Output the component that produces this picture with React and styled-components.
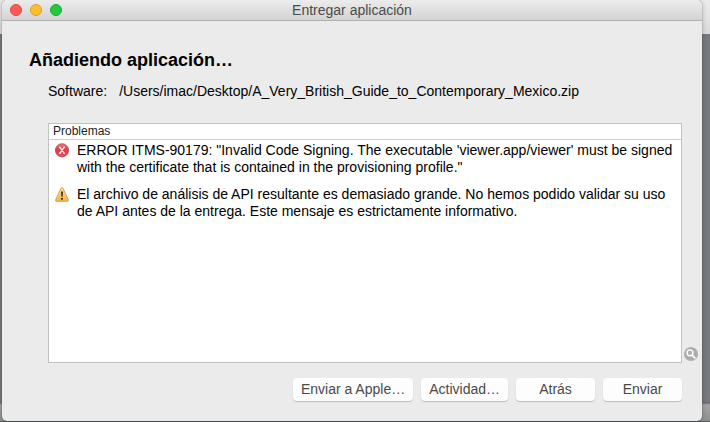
import React from "react";
import styled, { createGlobalStyle } from "styled-components";

const GlobalStyle = createGlobalStyle`
  *, *::before, *::after { box-sizing: border-box; }
  body {
    margin: 0;
    font-family: "Liberation Sans", Helvetica, Arial, sans-serif;
    font-size: 14px;
    line-height: 17px;
    color: #000;
  }
`;

const Desktop = styled.div`
  display: flex;
  min-height: 100vh;
  padding: 0 8px 1px 2px;
  background:
    linear-gradient(#55575a, #55575a) bottom left / 100% 1px no-repeat,
    linear-gradient(#5c5d5f, #a4a4a4 3px, #8f8f8f) bottom left / 100% 20px no-repeat,
    linear-gradient(#ececec, #dadada) top left / 100% 34px no-repeat,
    #76797e;
`;

const Window = styled.main`
  flex: 1;
  min-width: 0;
  display: flex;
  flex-direction: column;
  background: #ebebeb;
  border-radius: 5px;
  box-shadow: 0 0 1px rgba(0, 0, 0, 0.5), 0 0 5px rgba(0, 0, 0, 0.25);
  overflow: hidden;
`;

const TitleBar = styled.header`
  display: grid;
  grid-template-columns: 1fr auto 1fr;
  align-items: center;
  height: 21px;
  padding: 0 8px;
  background: linear-gradient(#ececec, #d3d3d3);
  border-bottom: 1px solid #b1b1b1;
`;

const Lights = styled.div`
  display: flex;
  gap: 8px;
`;

const Light = styled.button`
  width: 12px;
  height: 12px;
  padding: 0;
  border: 1px solid ${(p) => p.$edge};
  border-radius: 50%;
  background: ${(p) => p.$fill};
`;

const WindowTitle = styled.div`
  color: #4b4b4b;
`;

const Content = styled.div`
  flex: 1;
  display: flex;
  flex-direction: column;
  padding: 28px 4px 20px 27px;
`;

const Heading = styled.h1`
  margin: 0;
  font-size: 18px;
  line-height: 22px;
  font-weight: bold;
`;

const Software = styled.dl`
  display: flex;
  gap: 12px;
  margin: 12px 0 23px 19px;

  dt, dd { margin: 0; }
`;

const PanelRow = styled.div`
  flex: 1;
  display: flex;
  align-items: flex-end;
  gap: 2px;
  margin-left: 19px;
`;

const Panel = styled.section`
  flex: 1;
  min-width: 0;
  align-self: stretch;
  background: #fff;
  border: 1px solid #c2c2c2;
`;

const PanelHeader = styled.h2`
  margin: 0;
  padding: 0 4px;
  font-size: 12px;
  line-height: 15px;
  font-weight: normal;
  color: #222;
  border-bottom: 1px solid #cfcfcf;
`;

const Problems = styled.ul`
  display: flex;
  flex-direction: column;
  gap: 10px;
  margin: 0;
  padding: 2px 6px;
  list-style: none;
`;

const Problem = styled.li`
  display: flex;
  gap: 8px;

  svg { flex: none; margin-top: 1px; }
`;

const Line = styled.span`
  display: block;
`;

const SearchButton = styled.button`
  display: flex;
  margin-bottom: 2px;
  padding: 0;
  border: 0;
  background: none;
`;

const Actions = styled.footer`
  display: flex;
  justify-content: flex-end;
  gap: 8px;
  margin: 15px 16px 0 0;
`;

const ActionButton = styled.button`
  min-width: 79px;
  height: 23px;
  padding: 0 8px;
  border: 0;
  border-radius: 4px;
  background: #fdfdfd;
  box-shadow: 0 1px 1px rgba(0, 0, 0, 0.2);
  font: inherit;
  color: #4a4a4a;
`;

const ErrorIcon = () => (
  <svg width="14" height="15" viewBox="0 0 14 15" aria-label="Error" role="img">
    <defs>
      <linearGradient id="err" x1="0" y1="0" x2="0" y2="1">
        <stop offset="0" stopColor="#e8757a" />
        <stop offset="0.5" stopColor="#dc3f48" />
        <stop offset="1" stopColor="#e8525a" />
      </linearGradient>
    </defs>
    <circle cx="7" cy="7.3" r="6.6" fill="url(#err)" stroke="#c03d44" strokeWidth="0.8" />
    <path d="M4.9 4.4L9.1 10.2M9.1 4.4L4.9 10.2" stroke="#fff" strokeWidth="1.3" strokeLinecap="round" />
    <path d="M4.1 4.2H5.8M8.2 4.2H9.9M4.1 10.4H5.8M8.2 10.4H9.9" stroke="#fff" strokeWidth="0.8" />
  </svg>
);

const WarningIcon = () => (
  <svg width="14" height="15" viewBox="0 0 14 15" aria-label="Advertencia" role="img">
    <defs>
      <linearGradient id="warn" x1="0" y1="0" x2="0" y2="1">
        <stop offset="0" stopColor="#fbe3a0" />
        <stop offset="1" stopColor="#f6b445" />
      </linearGradient>
    </defs>
    <path d="M7 0.6C7.5 0.6 7.8 0.9 8 1.3L13.4 12.9C13.7 13.7 13.4 14.3 12.6 14.3H1.4C0.6 14.3 0.3 13.7 0.6 12.9L6 1.3C6.2 0.9 6.5 0.6 7 0.6Z" fill="url(#warn)" stroke="#cf9a4a" strokeWidth="0.9" />
    <path d="M6 4.6H8L7.6 9.8H6.4Z" fill="#3f2b12" />
    <circle cx="7" cy="11.8" r="1.1" fill="#3f2b12" />
  </svg>
);

const SearchIcon = () => (
  <svg width="14" height="14" viewBox="0 0 14 14" aria-hidden="true">
    <circle cx="7" cy="7" r="7" fill="#adadad" />
    <circle cx="6" cy="5.8" r="2.9" fill="none" stroke="#fff" strokeWidth="1.4" />
    <path d="M8.2 8.1L10.8 10.8" stroke="#fff" strokeWidth="1.8" strokeLinecap="round" />
  </svg>
);

const problems = [
  {
    Icon: ErrorIcon,
    lines: [
      "ERROR ITMS-90179: \"Invalid Code Signing. The executable 'viewer.app/viewer' must be signed",
      "with the certificate that is contained in the provisioning profile.\"",
    ],
  },
  {
    Icon: WarningIcon,
    lines: [
      "El archivo de análisis de API resultante es demasiado grande. No hemos podido validar su uso",
      "de API antes de la entrega. Este mensaje es estrictamente informativo.",
    ],
  },
];

export default function App() {
  return (
    <>
      <GlobalStyle />
      <Desktop>
        <Window>
          <TitleBar>
            <Lights>
              <Light aria-label="Cerrar" $fill="#fc5b57" $edge="#e2463f" />
              <Light aria-label="Minimizar" $fill="#fdbc32" $edge="#dfa023" />
              <Light aria-label="Ampliar" $fill="#27c63f" $edge="#1dab2c" />
            </Lights>
            <WindowTitle>Entregar aplicación</WindowTitle>
          </TitleBar>
          <Content>
            <Heading>Añadiendo aplicación…</Heading>
            <Software>
              <dt>Software:</dt>
              <dd>/Users/imac/Desktop/A_Very_British_Guide_to_Contemporary_Mexico.zip</dd>
            </Software>
            <PanelRow>
              <Panel>
                <PanelHeader>Problemas</PanelHeader>
                <Problems>
                  {problems.map(({ Icon, lines }) => (
                    <Problem key={lines[0]}>
                      <Icon />
                      <div>
                        {lines.map((line) => (
                          <Line key={line}>{line}</Line>
                        ))}
                      </div>
                    </Problem>
                  ))}
                </Problems>
              </Panel>
              <SearchButton aria-label="Buscar">
                <SearchIcon />
              </SearchButton>
            </PanelRow>
            <Actions>
              <ActionButton>Enviar a Apple…</ActionButton>
              <ActionButton>Actividad…</ActionButton>
              <ActionButton>Atrás</ActionButton>
              <ActionButton>Enviar</ActionButton>
            </Actions>
          </Content>
        </Window>
      </Desktop>
    </>
  );
}
